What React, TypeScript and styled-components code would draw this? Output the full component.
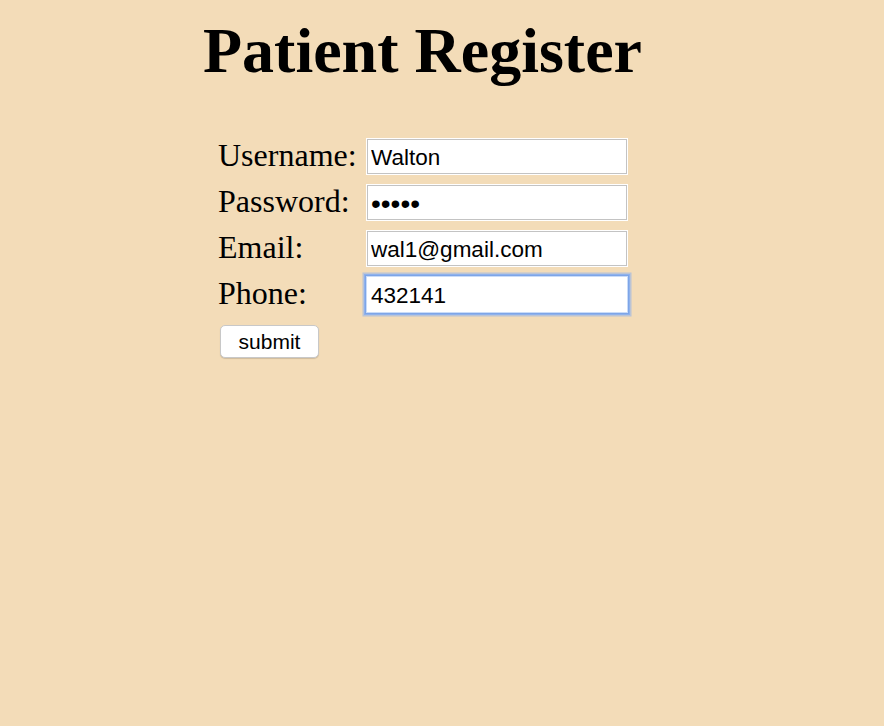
import React from "react";
import styled, { createGlobalStyle, css } from "styled-components";

const GlobalStyle = createGlobalStyle`
  html, body {
    margin: 0;
    padding: 0;
    background: #f3dcb8;
  }
  body {
    font-family: "Liberation Serif", "Times New Roman", serif;
    color: #000;
  }
`;

const Page = styled.div`
  width: 884px;
  min-height: 726px;
  background: #f3dcb8;
  padding-left: 203px;
  padding-top: 14px;
  box-sizing: border-box;
`;

const Title = styled.h1`
  margin: 0;
  font-family: "Liberation Serif", "Times New Roman", serif;
  font-weight: bold;
  font-size: 64px;
  line-height: 74px;
`;

const Form = styled.form`
  margin-top: 50px;
  padding-left: 15px;
  display: flex;
  flex-direction: column;
  align-items: flex-start;
`;

const Grid = styled.div`
  display: grid;
  grid-template-columns: 148px 262px;
  row-gap: 9px;
`;

const Label = styled.label`
  font-family: "Liberation Serif", "Times New Roman", serif;
  font-size: 32px;
  line-height: 35px;
  height: 37px;
  white-space: nowrap;
`;

const Input = styled.input<{ $focused?: boolean; $secret?: boolean }>`
  box-sizing: border-box;
  width: 262px;
  height: 37px;
  margin: 0;
  padding: 2px 4px 0;
  font-family: "Liberation Sans", Arial, sans-serif;
  font-size: ${(p) => (p.$secret ? "28px" : "22.5px")};
  color: #000;
  background: #fff;
  border: 1px solid #fff;
  box-shadow: inset 0 0 0 1px #c3c3c3;
  outline: none;
  ${(p) =>
    p.$focused &&
    css`
      border: 1px solid #c9dcf9;
      box-shadow: inset 0 0 0 1px #ffffff, 0 0 0 1px #7ea5e7,
        0 0 0 2px #8fb2ec, 0 0 0 3.5px rgba(140, 176, 236, 0.55);
    `}
`;

const Submit = styled.button`
  margin-top: 12px;
  margin-left: 2px;
  width: 99px;
  height: 33px;
  box-sizing: border-box;
  background: #fff;
  border: 1px solid #c8c8c8;
  border-radius: 5px;
  box-shadow: 0 1px 1px rgba(0, 0, 0, 0.15);
  font-family: "Liberation Sans", Arial, sans-serif;
  font-size: 21px;
  color: #000;
  padding: 0;
  line-height: 31px;
`;

export default function App() {
  return (
    <>
      <GlobalStyle />
      <Page>
        <Title>Patient Register</Title>
        <Form onSubmit={(e) => e.preventDefault()}>
          <Grid>
            <Label htmlFor="username">Username:</Label>
            <Input id="username" type="text" defaultValue="Walton" />
            <Label htmlFor="password">Password:</Label>
            <Input id="password" type="password" defaultValue="abcde" $secret />
            <Label htmlFor="email">Email:</Label>
            <Input id="email" type="text" defaultValue="wal1@gmail.com" />
            <Label htmlFor="phone">Phone:</Label>
            <Input id="phone" type="text" defaultValue="432141" $focused />
          </Grid>
          <Submit type="submit">submit</Submit>
        </Form>
      </Page>
    </>
  );
}
